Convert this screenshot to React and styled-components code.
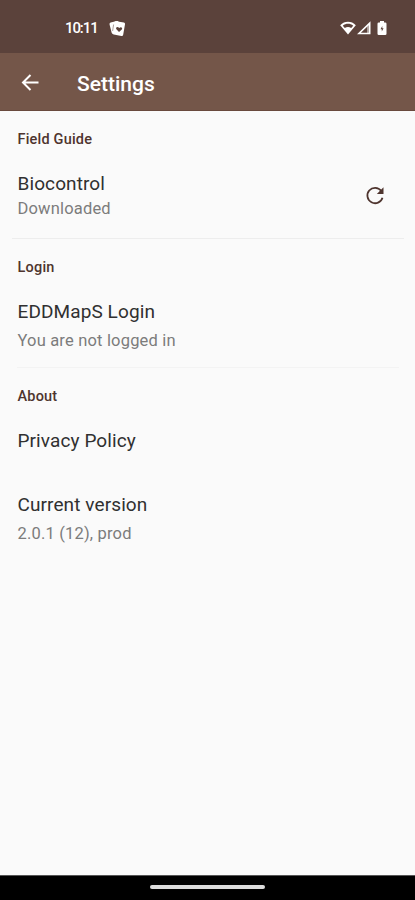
import React from 'react';
import styled, { createGlobalStyle } from 'styled-components';

const colors = {
  status: '#5b423b',
  header: '#745649',
  accent: '#4e342e',
  background: '#fafafa',
  title: '#303030',
  subtitle: '#7c7c7c',
  divider: '#ededed',
};

const GlobalStyle = createGlobalStyle`
  body {
    margin: 0;
    font-family: Roboto, 'Liberation Sans', sans-serif;
    background-color: ${colors.background};
  }
`;

const Screen = styled.div`
  width: 100%;
  height: 900px;
  display: flex;
  flex-direction: column;
  overflow: hidden;
`;

const StatusBar = styled.div`
  height: 53px;
  flex: none;
  box-sizing: border-box;
  display: flex;
  align-items: center;
  padding: 3px 28px 0 65px;
  color: #fff;
  background-color: ${colors.status};
`;

const Clock = styled.span`
  width: 44px;
  font-size: 15px;
  font-weight: 500;
  letter-spacing: -1.1px;
  line-height: 20px;
`;

const StatusIcons = styled.div`
  display: flex;
  align-items: center;
  gap: 1px;
  margin-left: auto;

  svg:last-child {
    margin-left: 5px;
  }
`;

const Header = styled.header`
  height: 58px;
  flex: none;
  box-sizing: border-box;
  display: flex;
  align-items: center;
  padding: 2px 0 0 20px;
  border-bottom: 1px solid #69493d;
  color: #fff;
  background-color: ${colors.header};
`;

const HeaderTitle = styled.h1`
  margin: 2px 0 0 36px;
  font-size: 21px;
  font-weight: 500;
  line-height: 24px;
`;

const Content = styled.main`
  flex: 1;
  background-color: ${colors.background};
`;

const Section = styled.section`
  height: ${(props) => props.$height}px;
  box-sizing: border-box;
  padding: 19px 29px 0 17.5px;
`;

const SectionTitle = styled.h2`
  margin: 0 0 22px;
  color: ${colors.accent};
  font-size: 14.5px;
  font-weight: 500;
  line-height: 20px;
  letter-spacing: 0.2px;
`;

const Divider = styled.div`
  height: 1px;
  margin: 0 ${(props) => props.$right}px 0 ${(props) => props.$left}px;
  background-color: ${(props) => props.$color || colors.divider};
`;

const Row = styled.div`
  display: flex;
  align-items: center;
  justify-content: space-between;
  margin-bottom: ${(props) => props.$after || 0}px;
`;

const RowTitle = styled.div`
  color: ${colors.title};
  font-size: 19px;
  line-height: 24px;
  letter-spacing: 0.1px;
`;

const RowSubtitle = styled.div`
  margin-top: ${(props) => props.$gap}px;
  color: ${colors.subtitle};
  font-size: 16.5px;
  line-height: 20px;
  letter-spacing: 0.18px;
`;

const NavBar = styled.div`
  height: 24px;
  flex: none;
  display: flex;
  justify-content: center;
  border-top: 1px solid #555;
  background-color: #000;
`;

const NavHandle = styled.div`
  width: 115px;
  height: 4px;
  margin-top: 9px;
  border-radius: 2px;
  background-color: #dcdcdc;
`;

const CardsIcon = () => (
  <svg width="17" height="17" viewBox="0 0 17 17">
    <rect x="1.6" y="1.6" width="9.4" height="11.4" rx="1.5" fill="#fff" transform="rotate(-14 6.5 8)" />
    <rect x="4.3" y="1.8" width="10.8" height="13.6" rx="1.5" fill="#fff" transform="rotate(10 10 9)" />
    <path d="M10 12 7.4 9.2c-1.3-1.600 1.100-3.200 2.800-1.300 2-1.600 3.800.2 2.600 1.600z" fill={colors.status} />
    <path d="M4.600 4.500 3.600 11" fill="none" stroke={colors.status} strokeWidth="0.5" />
  </svg>
);

const WifiIcon = () => (
  <svg width="16" height="14" viewBox="0 0 16 14">
    <path d="M8 13.5.2 4.200C4.500-.3 11.500-.3 15.800 4.200z" fill="#fff" />
    <path d="M2.800 4.700c3-2.500 7.400-2.500 10.400 0L11.200 7c-2-1.200-4.400-1.200-6.400 0z" fill={colors.status} />
  </svg>
);

const SignalIcon = () => (
  <svg width="14" height="14" viewBox="0 0 14 14">
    <path d="M12.700 2.200v10.300H2z" fill="none" stroke="#fff" strokeWidth="1.600" />
    <path d="M10 5v7h3V2z" fill="#fff" opacity="0.500" />
  </svg>
);

const BatteryIcon = () => (
  <svg width="10" height="16" viewBox="0 0 10 16">
    <path d="M3 1h4v1.500h1.200q1.300 0 1.300 1.300v9.900q0 1.300-1.300 1.300H1.800Q.5 15 .5 13.700V3.800q0-1.300 1.300-1.300H3z" fill="#fff" />
    <path d="M5.300 6 3.500 9.200h1.300V11.500L6.600 8.300H5.300z" fill={colors.status} />
  </svg>
);

const BackIcon = () => (
  <svg width="21" height="20" viewBox="0 0 21 20">
    <path d="M18.500 9.500H3M10.500 2 3 9.500l7.500 7.500" fill="none" stroke="#fff" strokeWidth="2" />
  </svg>
);

const RefreshIcon = () => (
  <svg width="22" height="22" viewBox="0 0 22 22">
    <path d="M17.200 5.800A7.700 7.700 0 1 0 18.500 12.700" fill="none" stroke={colors.accent} strokeWidth="1.800" />
    <path d="M19.500 2.200V8.900H12.800z" fill={colors.accent} />
  </svg>
);

const App = () => {
  return (
    <Screen>
      <GlobalStyle />
      <StatusBar>
        <Clock>10:11</Clock>
        <CardsIcon />
        <StatusIcons>
          <WifiIcon />
          <SignalIcon />
          <BatteryIcon />
        </StatusIcons>
      </StatusBar>
      <Header>
        <BackIcon />
        <HeaderTitle>Settings</HeaderTitle>
      </Header>
      <Content>
        <Section $height={127}>
          <SectionTitle>Field Guide</SectionTitle>
          <Row>
            <div>
              <RowTitle>Biocontrol</RowTitle>
              <RowSubtitle $gap={3}>Downloaded</RowSubtitle>
            </div>
            <RefreshIcon />
          </Row>
        </Section>
        <Divider $left={12} $right={11} />
        <Section $height={128}>
          <SectionTitle>Login</SectionTitle>
          <RowTitle>EDDMapS Login</RowTitle>
          <RowSubtitle $gap={7}>You are not logged in</RowSubtitle>
        </Section>
        <Divider $left={17} $right={16} $color="#f3f3f3" />
        <Section $height={200}>
          <SectionTitle>About</SectionTitle>
          <Row $after={40}>
            <RowTitle>Privacy Policy</RowTitle>
          </Row>
          <RowTitle>Current version</RowTitle>
          <RowSubtitle $gap={7}>2.0.1 (12), prod</RowSubtitle>
        </Section>
      </Content>
      <NavBar>
        <NavHandle />
      </NavBar>
    </Screen>
  );
};

export default App;
